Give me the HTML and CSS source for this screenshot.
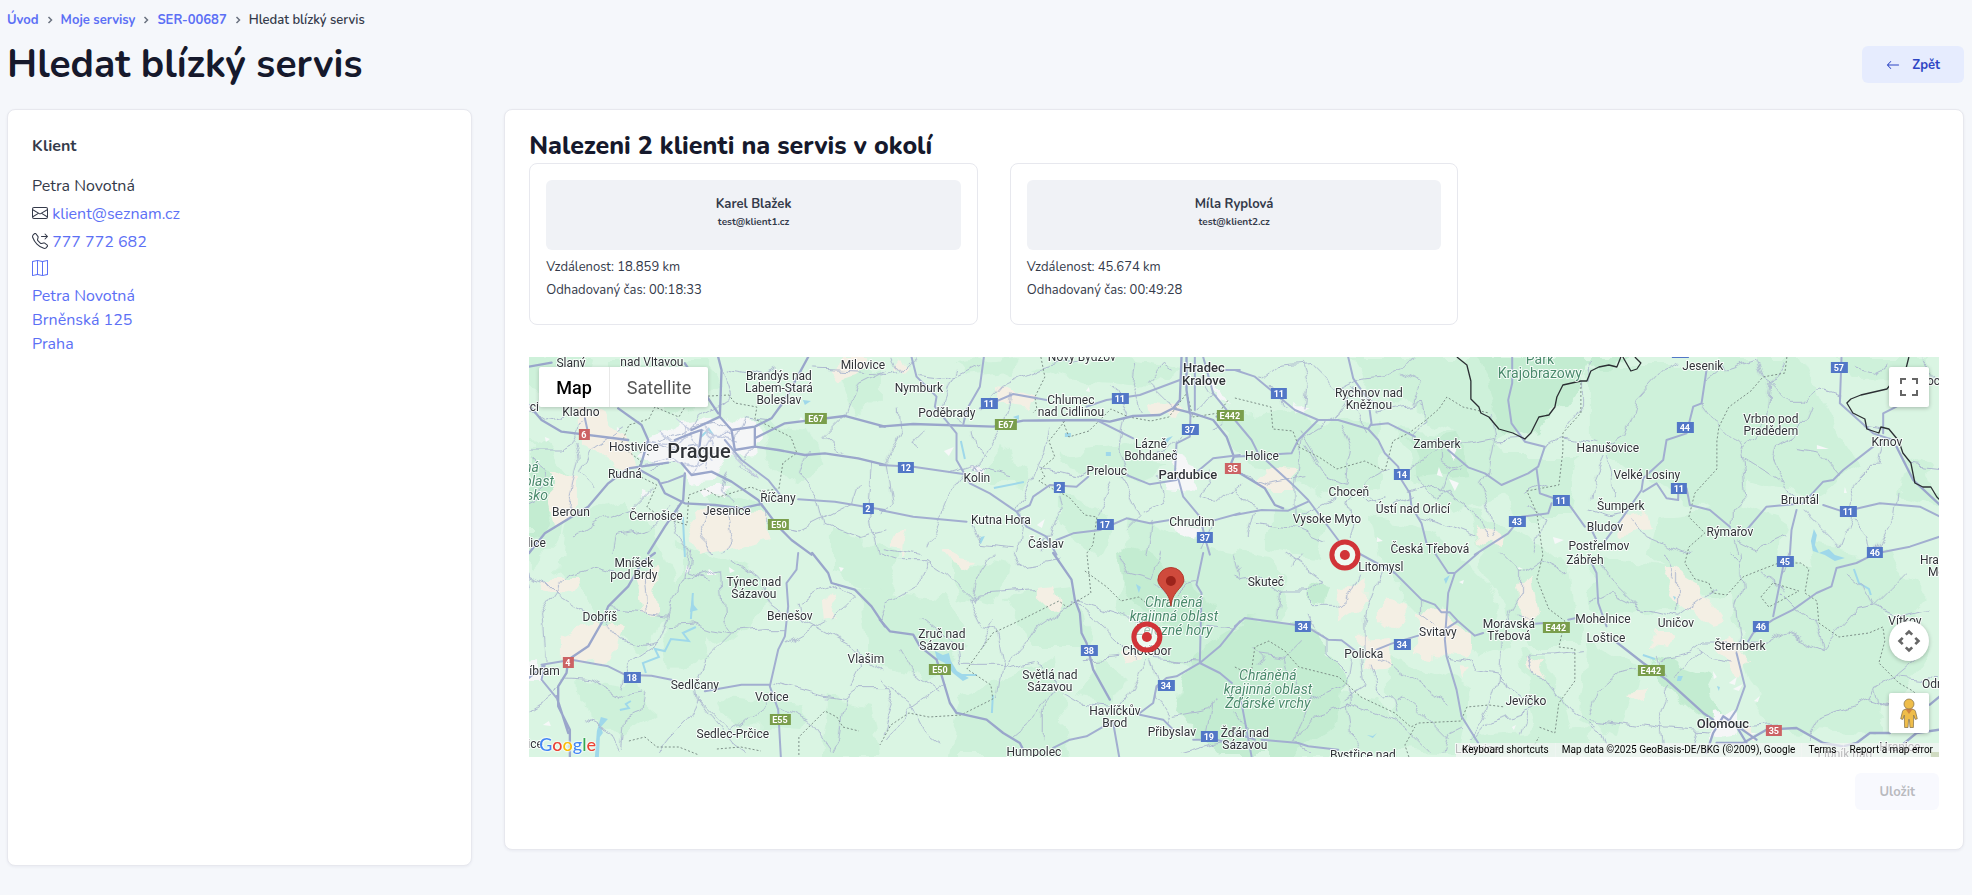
FILE: index.html
```
<!DOCTYPE html>
<html lang="cs">
<head>
    <meta charset="UTF-8">
    <meta name="viewport" content="width=device-width, initial-scale=1.0">
    <title>Hledat blízký servis</title>
    <link rel="stylesheet" href="styles.css">
</head>
<body>
    <header class="page-header">
        <div>
            <nav class="breadcrumb" aria-label="Drobečková navigace">
                <a href="#">Úvod</a>
                <svg class="chevron" viewBox="0 0 6 8"><path d="M1.5 1l3 3-3 3"/></svg>
                <a href="#">Moje servisy</a>
                <svg class="chevron" viewBox="0 0 6 8"><path d="M1.5 1l3 3-3 3"/></svg>
                <a href="#">SER-00687</a>
                <svg class="chevron" viewBox="0 0 6 8"><path d="M1.5 1l3 3-3 3"/></svg>
                <span>Hledat blízký servis</span>
            </nav>
            <h1>Hledat blízký servis</h1>
        </div>
        <button type="button" class="btn btn-back">
            <svg class="arrow" viewBox="0 0 16 16"><path fill-rule="evenodd" d="M15 8a.5.5 0 0 0-.5-.5H2.707l3.147-3.146a.5.5 0 1 0-.708-.708l-4 4a.5.5 0 0 0 0 .708l4 4a.5.5 0 0 0 .708-.708L2.707 8.5H14.5A.5.5 0 0 0 15 8"/></svg>
            Zpět
        </button>
    </header>

    <main class="layout">
        <section class="card client">
            <h2>Klient</h2>
            <p>Petra Novotná</p>
            <p>
                <svg class="icon" viewBox="0 0 16 16"><path d="M0 4a2 2 0 0 1 2-2h12a2 2 0 0 1 2 2v8a2 2 0 0 1-2 2H2a2 2 0 0 1-2-2zm2-1a1 1 0 0 0-1 1v.217l7 4.2 7-4.2V4a1 1 0 0 0-1-1zm13 2.383-4.708 2.825L15 11.105zm-.034 6.876-5.64-3.471L8 9.583l-1.326-.795-5.64 3.47A1 1 0 0 0 2 13h12a1 1 0 0 0 .966-.741M1 11.105l4.708-2.897L1 5.383z"/></svg>
                <a href="#">klient@seznam.cz</a>
            </p>
            <p>
                <svg class="icon" viewBox="0 0 16 16"><path d="M3.654 1.328a.678.678 0 0 0-1.015-.063L1.605 2.3c-.483.484-.661 1.169-.45 1.77a17.6 17.6 0 0 0 4.168 6.608 17.6 17.6 0 0 0 6.608 4.168c.601.211 1.286.033 1.77-.45l1.034-1.034a.678.678 0 0 0-.063-1.015l-2.307-1.794a.68.68 0 0 0-.58-.122l-2.19.547a1.75 1.75 0 0 1-1.657-.459L5.482 8.062a1.75 1.75 0 0 1-.46-1.657l.548-2.19a.68.68 0 0 0-.122-.58zM1.884.511a1.745 1.745 0 0 1 2.612.163L6.29 2.98c.329.423.445.974.315 1.494l-.547 2.19a.68.68 0 0 0 .178.643l2.457 2.457a.68.68 0 0 0 .644.178l2.189-.547a1.75 1.75 0 0 1 1.494.315l2.306 1.794c.829.645.905 1.87.163 2.611l-1.034 1.034c-.74.74-1.846 1.065-2.877.702a18.6 18.6 0 0 1-7.01-4.42 18.6 18.6 0 0 1-4.42-7.009c-.362-1.03-.037-2.137.703-2.877zM12.646.646a.5.5 0 0 1 .708 0l2.5 2.5a.5.5 0 0 1 0 .708l-2.5 2.5a.5.5 0 0 1-.708-.708L14.293 4H9.5a.5.5 0 0 1 0-1h4.793l-1.647-1.646a.5.5 0 0 1 0-.708"/></svg>
                <a href="#">777 772 682</a>
            </p>
            <a class="address" href="#">
                <svg class="icon" viewBox="0 0 16 16"><path fill-rule="evenodd" d="M15.817.113A.5.5 0 0 1 16 .5v14a.5.5 0 0 1-.402.49l-5 1a.5.5 0 0 1-.196 0L5.5 15.01l-4.902.98A.5.5 0 0 1 0 15.5v-14a.5.5 0 0 1 .402-.49l5-1a.5.5 0 0 1 .196 0L10.5.99l4.902-.98a.5.5 0 0 1 .415.103M10 1.91l-4-.8v12.98l4 .8zm1 12.98 4-.8V1.11l-4 .8zm-6-.8V1.11l-4 .8v12.98z"/></svg>
                <span>Petra Novotná</span>
                <span>Brněnská 125</span>
                <span>Praha</span>
            </a>
        </section>

        <section class="card results">
            <h2>Nalezeni 2 klienti na servis v okolí</h2>
            <div class="matches">
                <article class="match">
                    <div class="match-head">
                        <strong>Karel Blažek</strong>
                        <small>test@klient1.cz</small>
                    </div>
                    <p>Vzdálenost: 18.859 km</p>
                    <p>Odhadovaný čas: 00:18:33</p>
                </article>
                <article class="match">
                    <div class="match-head">
                        <strong>Míla Ryplová</strong>
                        <small>test@klient2.cz</small>
                    </div>
                    <p>Vzdálenost: 45.674 km</p>
                    <p>Odhadovaný čas: 00:49:28</p>
                </article>
            </div>

            <div class="map">
                <svg class="map-canvas" viewBox="0 0 1410 400" preserveAspectRatio="xMidYMid slice" role="img" aria-label="Mapa">
                    <defs>
                        <filter id="rough" x="0" y="0" width="100%" height="100%" color-interpolation-filters="sRGB">
                            <feTurbulence type="fractalNoise" baseFrequency="0.035" numOctaves="3" seed="4"/>
                            <feDisplacementMap in="SourceGraphic" scale="26" xChannelSelector="R" yChannelSelector="G"/>
                        </filter>
                        <filter id="wiggle" x="0" y="0" width="100%" height="100%" color-interpolation-filters="sRGB">
                            <feTurbulence type="fractalNoise" baseFrequency="0.05" numOctaves="2" seed="9"/>
                            <feDisplacementMap in="SourceGraphic" scale="14" xChannelSelector="R" yChannelSelector="G"/>
                        </filter>
                    </defs>
                    <rect class="land" x="-20" y="-20" width="1450" height="440"/>

                    <!-- lesy -->
                    <g class="forest" filter="url(#rough)">
                        <path d="M0 0H60L52 30 20 44 0 36ZM76 4H180L190 30 150 60 120 46 84 30ZM0 84L20 88 44 120 34 180 0 210ZM40 160L96 146 130 180 150 240 110 300 60 250 30 210ZM150 186L230 214 240 250 190 290 150 260ZM230 64L280 70 300 110 262 128 236 100ZM182 132L240 150 230 166 186 160ZM312 20L350 10 350 46 326 60ZM300 170L370 200 360 236 300 220Z"/>
                        <path d="M50 320L100 326 130 352 90 380 54 350ZM130 220L172 230 180 300 140 312ZM190 340L280 346 270 372 200 366ZM330 230L420 240 440 290 400 330 340 300ZM300 340L340 350 350 400H290ZM420 200L480 210 470 250 430 240ZM470 90L500 110 490 130 450 126ZM430 10L490 0 480 20 440 24ZM500 6L600 0 650 10 620 30 560 24ZM530 96L600 86 640 110 600 122 540 110ZM530 130L580 160 570 200 530 170ZM430 340L530 300 540 400H420ZM480 240L540 230 560 290 500 290ZM570 300L600 320 580 350 550 340Z"/>
                        <path d="M600 160L680 190 740 200 760 250 700 330 640 300 590 250ZM690 60L770 50 800 100 760 120 700 100ZM770 70L850 66 850 130 800 140 760 110ZM820 0H980L1000 60 960 90 900 60 840 30ZM870 70L960 76 980 130 930 160 880 120ZM740 150L800 160 790 200 740 190ZM840 160L900 170 960 230 980 290 950 300 900 230 850 200ZM870 210L920 230 910 260 870 250ZM940 150L1000 180 1040 210 1050 290 1000 290 960 230ZM960 100L1050 100 1040 160 990 160Z"/>
                        <path d="M1060 10H1200L1240 50 1220 130 1200 160 1110 120 1060 80ZM1190 0H1270L1300 60 1330 110 1280 140 1210 120ZM1130 160L1200 150 1260 170 1240 210 1180 240 1120 200ZM1060 200L1140 210 1150 250 1100 260 1060 250ZM1200 220L1270 200 1330 230 1400 290 1340 380 1240 370 1210 290ZM1380 100L1410 120V150L1370 140ZM1280 190L1360 200 1400 240 1380 262 1290 230ZM1060 280L1110 310 1090 380 1050 360ZM860 300L940 330 930 396 860 390ZM940 380L1060 370V400H940ZM990 290L1020 300 1050 400H1010ZM770 330L850 340 870 400H760ZM1310 0H1400V20L1330 22Z"/>
                    </g>
                    <g class="forest-deep" filter="url(#rough)">
                        <path d="M0 96L16 120 24 150 8 180 0 184ZM590 190L640 206 684 250 670 276 620 260 594 230ZM660 300L720 262 780 268 816 320 806 370 760 400H690L650 350ZM946 0H1066L1040 40 1010 74 980 78 962 50ZM880 82L930 76 940 116 890 120ZM1122 300L1176 320 1196 360 1180 366 1130 320ZM1060 0H1100L1080 14ZM780 224L800 230 796 250 778 244Z"/>
                    </g>
                    <g class="clearing" filter="url(#rough)">
                        <path d="M50 46L90 70 110 112 96 118 50 86ZM16 120L46 114 46 160 28 168ZM160 156L238 158 244 180 170 196ZM296 12L310 0H336V14L306 24ZM104 220L130 216 126 256 110 254ZM34 276L70 260 94 272 84 300 34 308ZM296 240L306 236 312 262 298 264ZM508 232L524 230 530 248 508 250ZM468 30L504 40 500 54 470 50ZM10 220L54 220 40 240 14 234ZM734 110L768 112 768 132 736 132ZM620 44L650 50 646 60 622 56Z"/>
                        <path d="M810 230L838 226 836 250 814 264ZM850 244L880 254 870 270 850 260ZM828 282L864 280 862 310 836 314ZM886 256L920 252 944 280 936 300 890 292ZM984 230L1004 220 1010 260 996 262ZM1144 214L1170 230 1196 266 1180 270 1150 246 1130 214ZM1196 276L1216 300 1210 316 1192 300ZM1000 300L1020 308 1014 322 1002 318ZM926 308L940 310 930 324ZM948 168L970 180 968 194 950 186ZM1094 156L1116 152 1120 172 1096 176ZM590 296L614 294 614 304 596 306ZM1128 276L1144 276 1140 292 1124 290ZM1096 332L1116 330 1116 346ZM1210 366L1226 372 1220 384ZM370 176L378 174 374 196 362 194ZM368 0L378 10 370 18ZM412 196L450 200 440 212 420 206Z"/>
                    </g>
                    <g class="town" filter="url(#rough)">
                        <path d="M118 84L150 66 190 60 226 70 230 94 202 100 190 122 160 124 140 100 110 104ZM176 130L200 130 194 144 180 142ZM648 100L668 110 666 136 640 134ZM676 22L690 44 700 48 680 20ZM1186 354L1204 350 1208 380 1184 384ZM0 308L12 306 12 324 0 324ZM650 168L670 170 664 184 652 180ZM768 44L780 50 772 56ZM914 90L926 92 920 104ZM440 110L454 112 450 126ZM108 134L118 138 112 142Z"/>
                    </g>
                    <g class="snippet">
                        <path d="M16 80l5 2-4 3zM88 70l4 2-4 2zM272 60l3 3-5 1zM310 210l5 1-3 4zM425 90l-10 4 5 5zM516 162l-8 6 5 3zM560 30l-3 4 4 1zM848 180l6 4-6 1zM910 110l4 10-6-2zM920 122l10 4-4 8zM1024 180l11 3-9 4zM990 210l4 2-5 0zM1288 88l12 4-12 0zM930 225l5-2-1 4zM1184 314l4 6-3 2zM1200 326l8-6-2 8zM1204 332l10-5-4 7zM1225 344l6-5-2 6zM1222 376l6 0-5 2zM983 370l4-2-2 5zM158 208l4 5-6 4zM180 212l8 6-10 0zM200 210l6 4-5 2zM1316 130l2 6-3 0zM186 70l-3 4 5 2zM20 364l-6 4 8 1z"/>
                    </g>

                    <!-- vodní plochy -->
                    <g class="water">
                        <path d="M164 239L165 248 169 253 161 255ZM72 360L79 362 72 370 74 376 71 380 70 400H66L68 374ZM274 43L282 44 276 48ZM484 60L490 58 490 63ZM536 76h6v4h-6ZM577 95h5v4h-5ZM636 82L644 79 638 86 634 90ZM406 294L414 298 420 296 422 304 428 314 440 321 434 324 424 316 416 306 408 302ZM607 227L612 230 610 236ZM1149 319L1154 319 1152 324 1148 324ZM1188 329l3 1-1 4ZM1144 239l3 1-1 3ZM452 180l4-1-4 8-2-2ZM1285 172L1288 178 1286 188 1290 196 1300 192 1306 198 1316 201 1306 204 1296 198 1284 194 1282 184ZM915 222l6-4-4 9ZM838 378l6 1 4-3-4 5Z"/>
                        <path class="river" d="M167 270L154 276 160 284 142 282 136 294 126 292 130 300 114 306 117 316M164 236L162 262M102 344l-5 3 3 4-9 2M431 318L448 318M464 338L463 356M432 84L436 102M465 131L495 125M1325 212L1330 226 1340 232 1342 238M1114 298L1126 302M156 200L154 160M172 80L180 72 184 78"/>
                    </g>

                    <!-- silnice nižší třídy -->
                    <g class="road-minor" filter="url(#wiggle)">
                        <g transform="translate(-4 -7) scale(.3333)">
                            <path d="M12 180L60 210 110 200 150 150 140 80M170 210L140 280 100 300 12 300M150 280L160 330 140 420 120 500M290 240L200 300 170 370 210 410M360 270L470 300 520 290M380 420L330 470 250 500 150 560M440 470L370 540 280 560 270 614M470 470L440 540 500 614M550 470L530 540 560 614M610 480L620 560 590 614M690 470L740 520 820 540 900 500 980 460 1000 400M850 310L830 380 880 440 900 520 1000 560 1080 540M1040 340L1030 460 1060 614M960 200L900 260 960 310M1080 60L1000 100 960 200M860 60L1080 70M620 240L560 220 480 240 400 270M460 330L380 360M630 270L660 200 740 210M690 290L640 340 700 380M500 240L520 200 620 140 590 60M20 330L60 360 50 440 12 460M610 60L720 80 760 60M610 360L590 420 640 470"/>
                            <path class="city" d="M360 275L430 280 520 250 620 250M370 340L450 320 490 350 620 290M500 250L520 300 500 370M540 230L560 290 540 350M440 300L470 270 480 220M570 340L530 300 560 250 640 270M630 310L670 350 700 380M450 200L500 240M400 240L460 290"/>
                        </g>
                        <g transform="translate(351 -7) scale(.3333)">
                            <path d="M0 75L60 60 100 21M120 80L200 90 300 40M230 60L190 170 250 220M310 180L370 110 480 60 600 30M390 130L370 220 310 320 280 360M55 180L60 250 20 330 40 470 0 500M130 240L90 280 110 290M270 240L280 290 320 320M510 240L490 310 470 350 430 450 410 490M210 370L280 350 390 380M250 370L200 450 180 500M540 430L550 480 510 540 490 600M700 100L740 190 720 300 750 380M770 40L760 100 790 190M470 350L600 380 630 370M720 380L780 500 740 540M830 380L850 450 790 480M900 250L830 320M1050 180L1000 240M1000 360L960 440 1010 460 1080 400M1000 510L960 600M820 520L800 614M180 500L150 600M280 520L310 580 400 590M10 590L120 610M650 490L700 400M940 200L1000 130 970 80M880 180L800 100 850 40 880 60M40 21L60 60M430 490L410 614"/>
                        </g>
                        <g transform="translate(706 -7) scale(.3333)">
                            <path d="M80 90L130 50 230 40 310 120 370 90 440 80 540 30M360 110L300 200 200 260 190 330 180 420 180 500M210 180L220 100 200 40M320 220L350 290 330 400 270 380 210 290M390 240L340 160 300 200M350 110L420 150 430 180 560 160M540 260L570 210 560 160M620 300L620 340 660 360 690 340M680 360L640 370 620 420M520 430L600 400 640 430 720 490 760 560M770 200L780 260 760 370 740 400 760 470 780 560M780 270L870 265M590 270L700 280 780 265M980 260L930 290M990 240L1040 170 1040 100M1080 280L980 260M300 440L200 490M340 450L360 520 350 560M340 450L410 380 460 350M380 430L460 480 530 440M20 370L100 400 210 380M0 410L60 480 40 560M60 520L200 540 270 570M100 100L150 170M250 340L190 240M600 300L530 350 500 370M1060 100L1070 40M550 500L620 520 720 560M450 440L400 460 380 440M500 70L560 100 540 160M540 380L600 440 640 420 660 450M880 470L930 510 900 614M930 400L870 430"/>
                        </g>
                        <g transform="translate(1061 -7) scale(.3333)">
                            <path d="M20 310L100 260 130 190 140 150 220 60 270 30M40 320L10 390 0 450M50 320L70 380 80 440M340 160L390 230 450 290 460 330 470 440 430 480 430 540M450 300L500 260 530 200 540 100 580 40M540 100L600 160 640 160 690 120 750 140M670 170L650 220 610 260 560 290 550 330 590 420 620 440M400 40L410 60 500 30 520 80 550 100M460 320L540 370 580 400M610 290L680 300 740 370M880 270L860 340 810 390 790 440 780 510 750 590M640 480L690 530 750 590M790 510L830 560 840 614M930 430L920 500 860 600M960 340L1050 350M880 240L820 230M440 570L500 600 590 560M130 500L170 560 300 614M0 480L60 500 110 490M1000 30L1030 90M340 100L390 60M430 570L440 614M800 50L860 70 900 50"/>
                        </g>
                        <g transform="translate(-4 196) scale(.3333)">
                            <path d="M12 70L60 90 90 120 130 70 210 40 280 60M90 120L50 180 60 300 60 330M90 120L150 160 240 200M240 200L290 260 360 280 400 270 430 190 360 180 260 170M360 60L370 180M480 80L440 150 430 190M490 0L480 80 590 50 600 210 620 240 540 320 510 380 520 440 490 500 430 560M430 215L500 210 560 230 620 240 720 230 780 230M120 375L200 380 290 430 350 420M100 410L60 440 12 470M520 440L620 540 690 480 740 440M520 440L620 570 660 600M290 580L300 500 350 480 360 420M740 390L820 410 900 430 960 440 1000 410 1080 410M1080 360L1020 320 980 280 830 200 790 180M1000 280L1010 340 980 400M960 440L940 560 920 600M770 460L850 500 920 600M830 150L880 120 930 100M930 90L1000 130 960 170 920 200M620 20L700 80 740 160 780 190M500 0L490 60 550 80M290 400L310 330 400 270M280 590L260 540 180 500M430 560L400 600M900 200L780 270M20 100L12 60M820 150L830 200"/>
                        </g>
                        <g transform="translate(351 196) scale(.3333)">
                            <path d="M140 20L200 60 280 140 300 60 340 0M140 20L110 100 20 150 0 200M0 0L60 20 140 20M270 140L310 220 350 230 370 320 350 440M270 140L300 120 470 110M130 200L230 280 240 340 370 340M370 340L420 300 470 220 580 145M460 320L380 340M470 320L530 390 490 480 490 570M580 140L740 190 780 220M590 150L700 250 760 310M20 400L100 460 140 540 180 570M0 380L40 450 10 540M200 390L100 460 20 560M610 320L720 310M810 320L830 380 830 440M800 320L760 400 720 460M830 440L870 490 860 510M870 320L940 330M800 290L830 320 960 330M880 60L920 100 950 95M840 0L820 80 740 60 710 0M920 100L880 140 830 100M400 0L420 40 540 20M900 600L1000 570 1080 560M980 220L1080 230M1000 450L980 550M550 420L600 450 700 460M500 440L460 500 400 550M350 200L300 280M60 290L100 360 180 420M880 490L980 470 1020 440"/>
                        </g>
                        <g transform="translate(706 196) scale(.3333)">
                            <path d="M0 0L20 80 70 70 140 120 130 200M140 120L210 120 250 160 300 160 360 110 380 60M210 120L270 80 250 70 150 0M220 180L240 230 270 260 270 300 330 360M440 60L410 140 390 200 390 300M560 140L560 190 600 220M860 60L860 120 820 190 790 230M860 60L800 0M400 330L420 400 470 440 480 480M430 310L490 350 560 400 640 450M640 310L700 320 720 350 780 360 800 380M800 240L790 380 760 480 710 560M790 380L860 430 900 440M880 310L900 370 880 300 960 300 1040 290M900 370L930 380 1000 470 1080 520M350 320L340 380 220 440 180 570M340 450L350 550 370 600M340 450L450 490 530 540 590 600M340 380L350 450 240 490 180 570M150 310L170 380 180 420M80 300L150 310 200 260M60 280L90 310 70 340M380 320L390 400 330 440M720 560L760 510 890 470 900 440M620 600L640 540 680 520M480 440L500 430 560 480 640 560M860 60L920 20 1000 60M200 0L180 40M0 70L20 80M840 180L900 210M180 570L240 600M0 480L60 560M880 480L860 540"/>
                        </g>
                        <g transform="translate(1061 196) scale(.3333)">
                            <path d="M0 150L60 120 140 160 220 180 270 190 350 130 380 110M30 30L80 100 140 160M260 60L260 180M220 0L250 70M450 0L460 100 440 160 450 240 440 290M210 320L300 300 340 270 440 270 540 270 590 240 700 290 740 240 800 170 850 160 950 60M200 310L210 340 230 370M0 480L20 410 80 360 140 350M0 500L220 530 360 540M240 400L210 470 220 530 230 600M330 290L370 320 430 330M570 120L620 170 670 200 700 290M580 110L520 60M770 60L820 100 850 160 920 190 1020 170M980 320L920 370 860 400 840 440 700 490 660 560M930 370L1040 380M860 400L870 450 930 480M250 370L340 300M0 520L40 540 60 600M440 520L560 510M840 440L900 460M310 600L330 540M980 320L960 260M600 0L580 60M420 0L450 30"/>
                        </g>
                    </g>

                    <!-- hranice okresů -->
                    <g class="district">
                        <path d="M120 98L92 88 100 68 120 62 126 50 150 60 162 40 200 38 206 46 228 50 226 62 262 80 268 96 254 106 250 132 232 134 222 130 190 140 176 132 160 138 158 168 132 160 118 150 128 128 108 118 112 104 96 92"/>
                        <path d="M512 0L516 20 506 40 508 52 504 56M536 64L520 84 526 100 512 112 516 120 510 124 524 132 540 140 556 158 568 160 564 188 558 196 562 236 538 250 530 244 510 254 490 264 464 276 438 312 462 328 464 342 432 358 400 360 380 356 362 368 351 388M556 214L578 230 592 244 610 240 622 250M534 64L540 80 560 74 582 52 600 60 622 64 640 60 658 36 664 60 690 56 700 42"/>
                        <path d="M706 41L742 50 744 72 764 74 770 90 790 100 808 112 836 104 856 114 864 84 880 76 896 64 910 52 918 40 934 50 960 56M1052 26L1052 56 1034 76 1034 94 1030 128 998 134 1008 156 1014 198 1008 222 1020 252 1036 264 1030 290 1046 292 1046 324 1030 346 1026 376 1010 370M1000 398L1010 380"/>
                        <path d="M1258 0L1256 16 1234 20 1222 34 1200 50 1190 70 1188 84 1188 112 1166 136 1160 160 1176 176 1160 190 1156 206 1166 222 1180 226 1184 236 1198 238 1214 220 1234 212 1250 206 1272 206 1280 212 1276 236 1288 244 1290 266 1310 280 1340 276 1354 270 1356 284 1350 306 1370 326 1384 334 1400 350M1232 240L1244 226 1270 234 1240 250Z"/>
                        <path d="M706 310L722 318 726 290 740 284 756 294 770 310 810 320 832 340 866 356 882 370 890 366 932 364 938 350 960 348 976 350M880 400L876 388 886 370M270 398L270 380 284 366 296 354 308 360 314 370 330 374M100 384L116 380 128 390 150 390 170 398M188 392L212 390 232 394"/>
                    </g>

                    <!-- hlavní silnice -->
                    <g class="road-main">
                        <g transform="translate(-4 -7) scale(.3333)">
                            <path class="trunk" d="M12 610L60 550 190 470 250 400 310 355 430 338M280 175L350 225 370 270 345 355M12 165L50 210 110 245 310 270M345 360L400 390 420 430 480 460 570 465 650 475 710 462M470 340L500 375 560 365 620 395 700 450 760 530 800 570 860 614M480 370L475 450 420 530 370 610M500 240L585 200 590 60 580 21M585 200L620 240 690 230 740 205 780 150 850 21M690 265L780 220 960 198 1080 230M620 240L630 300 690 290 760 300 840 315 900 310 1000 325 1080 345M690 235L690 290M12 50L80 38M580 190L520 100 480 40M450 270L500 250 530 240 520 320"/>
                            <path d="M180 205L190 250M600 270L650 330 730 390 770 440M820 448L930 455 1080 480M480 375L430 395 410 400"/>
                        </g>
                        <g transform="translate(351 -7) scale(.3333)">
                            <path class="trunk" d="M0 230L100 222 340 230 430 212 650 210 690 215 760 198 840 195 880 175 940 190 1000 210 1040 260 1062 320 1050 350M930 190L920 120 920 21M880 175L900 150 905 21"/>
                            <path d="M95 21L110 80 170 140 165 170 230 250 230 330 270 400 330 430 410 485 440 530 500 560 530 614M312 21L300 110 260 180 250 225M300 175L400 132 500 150M620 170L680 150 780 135 900 90M650 210L760 265M0 345L100 350 250 372M410 485L450 465 460 440 510 405 590 410 625 380M740 375L810 403 890 390M885 375L890 280 930 260 932 190M895 385L910 440 960 500 980 580 990 614M940 375L1000 325 1080 315M0 480L100 500 260 515M530 570L580 550 660 540 740 505 810 520 870 510M1000 512L1080 490M945 21L945 180M970 21L1000 130 1040 180 1010 200M1000 60L1080 60"/>
                        </g>
                        <g transform="translate(706 -7) scale(.3333)">
                            <path d="M0 60L60 80 180 180 250 210 310 210 400 237 430 270 450 310 490 350 500 390 525 430 530 470 560 520 575 580M0 320L170 310 190 270 250 210M0 210L50 270 70 310 180 410 220 450 310 570M340 21L355 85 400 150 410 220 400 237M410 225L460 220 510 245 540 260M640 300L700 352 750 370 800 405 880 370 910 350 930 290 870 275 830 220 820 150 832 100 832 21M905 355L915 430 1000 460 1050 530M950 460L940 490 860 500 820 550 720 614M0 495L80 480 160 482 220 455"/>
                            <path class="trunk" d="M15 370L90 415 120 465 145 475"/>
                        </g>
                        <g transform="translate(1061 -7) scale(.3333)">
                            <path d="M350 60L335 160 310 170 290 250 230 270 220 330 160 385 155 420 100 500 40 580M160 425L200 400 230 445 265 450 265 420 290 415 300 465 360 480 420 530M470 540L530 470 640 460 700 395 730 390 760 360 850 290M700 465L760 485 870 460 990 470 1050 500M620 480L605 540 600 614M755 21L750 160 850 250 910 270M880 250L880 190 920 170M860 610L960 590 1050 560M0 530L20 570"/>
                            <path class="trunk" d="M920 290L970 390 1050 465"/>
                        </g>
                        <g transform="translate(-4 196) scale(.3333)">
                            <path class="trunk" d="M390 0L350 30 310 100 250 160 230 210 190 280 130 320 125 360 100 400 100 460 135 530 135 610M862 0L910 60 920 90 990 110 1040 160 1080 220M95 430L130 540"/>
                            <path d="M820 0L815 50 785 90 790 160 780 250 760 290 735 400 760 470 768 612M50 335L140 320 250 340 300 365 380 368 440 380M540 415L650 395 735 395M60 335L50 380 95 435M12 375L60 335"/>
                        </g>
                        <g transform="translate(351 196) scale(.3333)">
                            <path class="trunk" d="M0 200L30 235 100 245 120 280 170 320 180 350 210 450 230 480 320 500 370 540 420 570 430 590M520 0L575 80 585 140 600 180 605 240 620 270 640 350 690 440"/>
                            <path d="M970 0L950 95 965 120 960 330M1080 205L1020 280 960 330 890 370 860 375 830 400 820 450 780 480M520 585L570 560 620 550 690 510M700 510L718 612M780 485L850 500 880 530M960 330L1020 360 1056 390M940 560L960 560M1010 560L1080 580"/>
                        </g>
                        <g transform="translate(706 196) scale(.3333)">
                            <path d="M0 220L30 195 180 215M230 230L280 260 320 262 370 300M425 290L470 272 550 248M370 0L480 60 560 140 600 155 620 178 645 178 670 205 720 248 745 240M600 0L640 60 660 60 730 0M660 60L640 120 630 260 635 310 665 410 680 490 730 570M630 230L668 205M18 440L50 610M80 560L190 570 220 580 310 590M0 540L60 560M900 212L930 210M1000 200L1020 196"/>
                        </g>
                        <g transform="translate(1061 196) scale(.3333)">
                            <path d="M0 20L20 60 25 150 50 220M580 40L550 190M475 265L490 240 550 200 610 170 680 120 725 100 740 45 800 30 840 10M440 300L465 400 440 470 420 500"/>
                            <path class="trunk" d="M70 260L160 330 230 380 340 480 370 500M350 600L370 540 400 490 500 560M440 520L470 570M380 570L460 570 530 530 620 525 700 570 760 580 800 570 840 540 900 540M1020 455L1050 430M920 590L980 540 1050 530"/>
                        </g>
                    </g>

                    <!-- státní hranice -->
                    <path class="border" d="M928 0L938 8 942 24 942 42 950 50 952 56 960 60 970 72 984 76 996 82 1002 76 1010 60 1020 58 1026 50 1028 40 1034 28 1052 24 1058 24 1062 14 1070 10 1080 8 1088 10 1092 0M1094 0L1102 14 1108 12 1112 6 1106 0M1380 0L1376 16 1368 20 1358 32 1332 38 1322 42 1318 46 1324 56 1336 62 1338 72 1350 76 1352 70 1360 72 1370 84 1374 96 1382 106 1386 126 1394 130 1402 130 1408 140 1412 144"/>

                    <!-- značky silnic -->
                    <g class="shield">
                        <g class="blue">
                            <rect x="452" y="41" width="17" height="11"/><text x="460" y="50">11</text>
                            <rect x="583" y="36" width="17" height="11"/><text x="591" y="45">11</text>
                            <rect x="653" y="67" width="17" height="11"/><text x="661" y="76">37</text>
                            <rect x="369" y="105" width="16" height="11"/><text x="377" y="114">12</text>
                            <rect x="334" y="146" width="11" height="11"/><text x="339" y="155">2</text>
                            <rect x="525" y="125" width="11" height="11"/><text x="530" y="134">2</text>
                            <rect x="568" y="162" width="17" height="11"/><text x="576" y="171">17</text>
                            <rect x="668" y="175" width="16" height="11"/><text x="676" y="184">37</text>
                            <rect x="742" y="31" width="16" height="11"/><text x="750" y="40">11</text>
                            <rect x="865" y="112" width="16" height="11"/><text x="873" y="121">14</text>
                            <rect x="980" y="159" width="17" height="11"/><text x="988" y="168">43</text>
                            <rect x="1024" y="138" width="17" height="11"/><text x="1032" y="147">11</text>
                            <rect x="1143" y="-10" width="17" height="11"/>
                            <rect x="1302" y="5" width="17" height="11"/><text x="1310" y="14">57</text>
                            <rect x="1148" y="65" width="17" height="11"/><text x="1156" y="74">44</text>
                            <rect x="1142" y="126" width="16" height="11"/><text x="1150" y="135">11</text>
                            <rect x="1311" y="149" width="17" height="11"/><text x="1319" y="158">11</text>
                            <rect x="1338" y="190" width="16" height="11"/><text x="1346" y="199">46</text>
                            <rect x="95" y="315" width="17" height="11"/><text x="103" y="324">18</text>
                            <rect x="552" y="288" width="17" height="11"/><text x="560" y="297">38</text>
                            <rect x="629" y="323" width="17" height="11"/><text x="637" y="332">34</text>
                            <rect x="672" y="374" width="17" height="11"/><text x="680" y="383">19</text>
                            <rect x="766" y="264" width="16" height="11"/><text x="774" y="273">34</text>
                            <rect x="865" y="282" width="17" height="11"/><text x="873" y="291">34</text>
                            <rect x="1248" y="199" width="17" height="11"/><text x="1256" y="208">45</text>
                            <rect x="1224" y="264" width="16" height="11"/><text x="1232" y="273">46</text>
                        </g>
                        <g class="green">
                            <rect x="276" y="56" width="22" height="11"/><text x="287" y="65">E67</text>
                            <rect x="466" y="62" width="22" height="11"/><text x="477" y="71">E67</text>
                            <rect x="688" y="53" width="27" height="11"/><text x="701" y="62">E442</text>
                            <rect x="239" y="162" width="21" height="11"/><text x="250" y="171">E50</text>
                            <rect x="400" y="307" width="22" height="11"/><text x="411" y="316">E50</text>
                            <rect x="241" y="357" width="21" height="11"/><text x="251" y="366">E55</text>
                            <rect x="1014" y="265" width="27" height="11"/><text x="1027" y="274">E442</text>
                            <rect x="1109" y="308" width="27" height="11"/><text x="1122" y="317">E442</text>
                            <rect x="1402" y="395" width="17" height="11"/>
                        </g>
                        <g class="red">
                            <rect x="50" y="72" width="11" height="11"/><text x="55" y="81">6</text>
                            <rect x="696" y="106" width="16" height="11"/><text x="704" y="115">35</text>
                            <rect x="34" y="300" width="11" height="11"/><text x="39" y="309">4</text>
                            <rect x="1237" y="368" width="16" height="11"/><text x="1245" y="377">35</text>
                        </g>
                    </g>

                    <!-- popisky -->
                    <g class="place">
                        <text x="42" y="10">Slaný</text>
                        <text x="123" y="9">nad Vltavou</text>
                        <text x="334" y="12">Milovice</text>
                        <text x="250" y="23">Brandýs nad</text>
                        <text x="250" y="35">Labem-Stará</text>
                        <text x="250" y="47">Boleslav</text>
                        <text x="52" y="59">Kladno</text>
                        <text class="end" x="10" y="54">eci</text>
                        <text x="105" y="94">Hostivice</text>
                        <text x="96" y="121">Rudná</text>
                        <text x="42" y="159">Beroun</text>
                        <text x="127" y="163">Černošice</text>
                        <text x="198" y="158">Jesenice</text>
                        <text x="249" y="145">Říčany</text>
                        <text class="end" x="17" y="190">lice</text>
                        <text x="390" y="35">Nymburk</text>
                        <text x="418" y="60">Poděbrady</text>
                        <text x="542" y="47">Chlumec</text>
                        <text x="542" y="59">nad Cidlinou</text>
                        <text x="553" y="4">Nový Bydžov</text>
                        <text x="622" y="91">Lázně</text>
                        <text x="622" y="103">Bohdaneč</text>
                        <text x="448" y="125">Kolin</text>
                        <text x="578" y="118">Prelouc</text>
                        <text x="472" y="167">Kutna Hora</text>
                        <text x="663" y="169">Chrudim</text>
                        <text x="517" y="191">Čáslav</text>
                        <text x="840" y="40">Rychnov nad</text>
                        <text x="840" y="52">Kněžnou</text>
                        <text x="908" y="91">Zamberk</text>
                        <text x="733" y="103">Holice</text>
                        <text x="820" y="139">Choceň</text>
                        <text x="884" y="156">Ústí nad Orlicí</text>
                        <text x="798" y="166">Vysoke Myto</text>
                        <text x="901" y="196">Česká Třebová</text>
                        <text x="1174" y="13">Jesenik</text>
                        <text x="1079" y="95">Hanušovice</text>
                        <text x="1118" y="122">Velké Losiny</text>
                        <text x="1092" y="153">Šumperk</text>
                        <text x="1076" y="174">Bludov</text>
                        <text x="1070" y="193">Postřelmov</text>
                        <text x="1201" y="179">Rýmařov</text>
                        <text x="1242" y="66">Vrbno pod</text>
                        <text x="1242" y="78">Pradědem</text>
                        <text x="1358" y="89">Krnov</text>
                        <text x="1271" y="147">Bruntál</text>
                        <text class="start" x="1398" y="28">ocz</text>
                        <text x="105" y="210">Mníšek</text>
                        <text x="105" y="222">pod Brdy</text>
                        <text x="225" y="229">Týnec nad</text>
                        <text x="225" y="241">Sázavou</text>
                        <text x="71" y="264">Dobříš</text>
                        <text x="261" y="263">Benešov</text>
                        <text x="337" y="306">Vlašim</text>
                        <text class="end" x="31" y="318">íbram</text>
                        <text x="166" y="332">Sedlčany</text>
                        <text x="243" y="344">Votice</text>
                        <text x="204" y="381">Sedlec-Prčice</text>
                        <text class="end" x="14" y="391">ice</text>
                        <text x="413" y="281">Zruč nad</text>
                        <text x="413" y="293">Sázavou</text>
                        <text x="521" y="322">Světlá nad</text>
                        <text x="521" y="334">Sázavou</text>
                        <text x="618" y="298">Chotěbor</text>
                        <text x="586" y="358">Havlíčkův</text>
                        <text x="586" y="370">Brod</text>
                        <text x="643" y="379">Přibyslav</text>
                        <text x="505" y="399">Humpolec</text>
                        <text x="716" y="380">Žďár nad</text>
                        <text x="716" y="392">Sázavou</text>
                        <text x="737" y="229">Skuteč</text>
                        <text x="852" y="214">Litomysl</text>
                        <text x="909" y="279">Svitavy</text>
                        <text x="835" y="301">Policka</text>
                        <text x="980" y="271">Moravská</text>
                        <text x="980" y="283">Třebová</text>
                        <text x="997" y="348">Jevíčko</text>
                        <text x="834" y="402">Bystřice nad</text>
                        <text class="start" x="926" y="396">Letovice</text>
                        <text x="1056" y="207">Zábřeh</text>
                        <text x="1074" y="266">Mohelnice</text>
                        <text x="1077" y="285">Loštice</text>
                        <text x="1147" y="270">Uničov</text>
                        <text x="1211" y="293">Šternberk</text>
                        <text class="start" x="1391" y="207">Hradec</text>
                        <text class="start" x="1399" y="219">Mor</text>
                        <text x="1376" y="268">Vítkov</text>
                        <text class="start" x="1393" y="331">Odry</text>
                        <text x="1371" y="394">Hranice</text>
                        <text x="1316" y="401">Lipník nad</text>
                    </g>
                    <g class="place city-name">
                        <text x="675" y="15">Hradec</text>
                        <text x="675" y="28">Kralove</text>
                        <text x="659" y="122">Pardubice</text>
                        <text x="1194" y="371">Olomouc</text>
                        <text class="capital" x="170" y="101">Prague</text>
                    </g>
                    <g class="place park">
                        <text class="end" x="10" y="115">Chráněná</text>
                        <text class="end" x="25" y="129">oblast</text>
                        <text class="end" x="19" y="143">Křivoklátsko</text>
                        <text x="645" y="250">Chráněná</text>
                        <text x="645" y="264">krajinná oblast</text>
                        <text x="645" y="278">Železné hory</text>
                        <text x="739" y="323">Chráněná</text>
                        <text x="739" y="337">krajinná oblast</text>
                        <text x="739" y="351">Žďárské vrchy</text>
                    </g>
                    <g class="place park-pl">
                        <text x="1011" y="7">Park</text>
                        <text x="1011" y="21">Krajobrazowy</text>
                    </g>

                    <!-- značky klientů -->
                    <path class="pin" d="M642 249c-1-9-4-12-8-17-3-3-5-6-5-9a13 12.500 0 0 1 26 0c0 3-2 6-5 9-4 5-7 8-8 17z"/>
                    <circle class="pin-dot" cx="642" cy="224" r="5"/>
                    <g class="target">
                        <circle class="ring" cx="618" cy="280" r="13"/><circle cx="618" cy="280" r="5"/>
                        <circle class="ring" cx="816" cy="198" r="13"/><circle cx="816" cy="198" r="5"/>
                    </g>
                </svg>

                <div class="map-type">
                    <button type="button" class="active">Map</button>
                    <button type="button">Satellite</button>
                </div>
                <button type="button" class="map-btn map-fullscreen" aria-label="Celá obrazovka">
                    <svg viewBox="0 0 18 18"><path d="M0 0v6h2V2h4V0H0zm16 0h-4v2h4v4h2V0h-2zm0 16h-4v2h6v-6h-2v4zM2 12H0v6h6v-2H2v-4z"/></svg>
                </button>
                <div class="map-side">
                    <button type="button" class="map-btn map-pan" aria-label="Posun mapy">
                        <svg class="pan" viewBox="0 0 24 24"><path d="M8.800 5.700L12 2.500l3.200 3.200M8.800 18.300l3.200 3.200 3.200-3.200M5.700 8.800L2.500 12l3.200 3.200M18.300 8.800l3.200 3.200-3.200 3.200"/></svg>
                    </button>
                    <button type="button" class="map-btn" aria-label="Street View">
                        <svg class="pegman" viewBox="0 0 18 30"><path class="peg" d="M5 11.500h8c1.500 0 2.300 1 2.600 2.300l1.700 7-2.100.6-1.500-4.200-.3 12.300H10l-.6-8h-.8l-.6 8H4.600l-.3-12.300-1.500 4.200-2.100-.6 1.700-7C2.700 12.500 3.500 11.500 5 11.500z"/><path class="collar" d="M5 10.500h8l-4 5.500z"/><circle class="peg" cx="9" cy="6" r="5"/></svg>
                    </button>
                </div>
                <a class="google-logo" href="#" aria-label="Google"><span class="g-blue">G</span><span class="g-red">o</span><span class="g-yellow">o</span><span class="g-blue">g</span><span class="g-green">l</span><span class="g-red">e</span></a>
                <div class="map-legal">
                    <button type="button">Keyboard shortcuts</button>
                    <span>Map data ©2025 GeoBasis-DE/BKG (©2009), Google</span>
                    <a href="#">Terms</a>
                    <a href="#">Report a map error</a>
                </div>
            </div>

            <div class="actions">
                <button type="button" class="btn btn-save" disabled>Uložit</button>
            </div>
        </section>
    </main>
</body>
</html>
```

FILE: styles.css
```
:root {
    --body-bg: #f5f7fb;
    --text: #343a4a;
    --heading: #16192c;
    --link: #5c70f5;
    --line: #e7e8ee;
}

* {
    box-sizing: border-box;
}

body {
    margin: 0;
    padding: 8px 8px 28px 7px;
    min-height: 100vh;
    background: var(--body-bg);
    color: var(--text);
    font: 400 16px/24px "Nunito", "Open Sans", "Noto Sans", sans-serif;
}

h1, h2, p {
    margin: 0;
}

a {
    color: var(--link);
    text-decoration: none;
}

button {
    font-family: inherit;
    cursor: pointer;
}

/* Hlavička */
.page-header {
    display: flex;
    justify-content: space-between;
    align-items: flex-end;
    margin-bottom: 26px;
}

.breadcrumb {
    display: flex;
    align-items: center;
    gap: 8px;
    font-size: 13px;
    font-weight: 600;
    line-height: 24px;
}

.breadcrumb a {
    font-weight: 700;
}

.chevron {
    width: 6px;
    height: 8px;
    fill: none;
    stroke: #6b7280;
    stroke-width: 1.5;
}

h1 {
    margin-top: 15px;
    font-size: 39px;
    font-weight: 700;
    line-height: 36px;
    color: var(--heading);
}

.btn {
    display: flex;
    align-items: center;
    justify-content: center;
    gap: 12px;
    height: 37px;
    padding: 0 24px;
    border: 0;
    border-radius: 6px;
    font-size: 13px;
    font-weight: 700;
}

.btn-back {
    background: #e6ecfe;
    color: #2d45c4;
}

.arrow {
    width: 14px;
    height: 14px;
    fill: currentColor;
}

.btn-save {
    background: #f8f9fe;
    color: #b9babf;
}

/* Rozložení */
.layout {
    display: grid;
    grid-template-columns: repeat(12, minmax(0, 1fr));
    gap: 32px;
    align-items: start;
}

.card {
    background: #fff;
    border: 1px solid var(--line);
    border-radius: 8px;
    box-shadow: 0 1px 3px rgba(30, 40, 80, 0.06);
}

.client {
    grid-column: span 3;
    min-height: 757px;
    padding: 24px;
}

.client h2 {
    margin-bottom: 16px;
    font-size: 16px;
    font-weight: 700;
    line-height: 24px;
}

.client p {
    margin-bottom: 4px;
}

.icon {
    width: 16px;
    height: 16px;
    vertical-align: -2px;
    fill: currentColor;
}

.address {
    display: flex;
    flex-direction: column;
}

.address .icon {
    margin: 2px 0 8px;
}

.results {
    grid-column: span 9;
    padding: 20px 24px 39px;
}

.results h2 {
    font-size: 25px;
    font-weight: 800;
    line-height: 33px;
    color: var(--heading);
}

.matches {
    display: grid;
    grid-template-columns: repeat(3, minmax(0, 1fr));
    gap: 32px;
    margin-bottom: 32px;
}

.match {
    padding: 16px 16px 22px;
    border: 1px solid var(--line);
    border-radius: 8px;
    font-size: 13px;
    line-height: 23px;
}

.match-head {
    display: flex;
    flex-direction: column;
    align-items: center;
    height: 70px;
    margin-bottom: 6px;
    padding-top: 15px;
    border-radius: 6px;
    background: #f0f2f6;
    line-height: 18px;
}

.match-head strong {
    font-size: 13px;
    font-weight: 700;
}

.match-head small {
    font-size: 10px;
    font-weight: 700;
}

.actions {
    display: flex;
    justify-content: flex-end;
    margin-top: 16px;
}

/* Mapa */
.map {
    position: relative;
    height: 400px;
    overflow: hidden;
    font-family: Roboto, Arial, sans-serif;
}

.map-canvas {
    display: block;
    width: 100%;
    height: 100%;
}

.land { fill: #daf5e3; }
.forest { fill: #cef1da; }
.forest-deep { fill: #c3ecd1; }
.clearing { fill: #f4efe4; }
.town { fill: #f5f6f7; }
.snippet { fill: #f6f8f8; }
.water { fill: #9fd8ea; }

.river {
    fill: none;
    stroke: #9fd8ea;
    stroke-width: 2;
}

.road-minor,
.road-main {
    fill: none;
    stroke-linejoin: round;
    stroke-linecap: round;
}

.road-minor {
    stroke: #adb8d0;
    stroke-width: 3;
}

.road-minor .city {
    stroke: #c3cbe0;
    stroke-width: 4;
}

.road-main {
    stroke: #a2aed0;
    stroke-width: 6;
}

.road-main .trunk {
    stroke: #9aa6cb;
    stroke-width: 7;
}

.district {
    fill: none;
    stroke: #7d8f88;
    stroke-dasharray: 2 2;
}

.border {
    fill: none;
    stroke: #2b2f33;
    stroke-width: 1.3;
    stroke-linejoin: round;
}

.shield text {
    fill: #fff;
    font-size: 9px;
    font-weight: 700;
    text-anchor: middle;
}

.blue rect { fill: #5277c7; }
.green rect { fill: #7a9e4c; }
.red rect { fill: #cc6264; }

.place text {
    fill: #303338;
    font-size: 12px;
    text-anchor: middle;
    stroke: rgba(255, 255, 255, 0.85);
    stroke-width: 2px;
    stroke-linejoin: round;
    paint-order: stroke;
}

.place .end { text-anchor: end; }
.place .start { text-anchor: start; }

.city-name text {
    font-size: 13px;
    font-weight: 500;
}

.city-name .capital {
    font-size: 20px;
}

.park text {
    fill: #4a8a6c;
    font-size: 14px;
    font-style: italic;
}

.park-pl text {
    fill: #4a8a6c;
    font-size: 14px;
}

.pin {
    fill: #cf4a3c;
    stroke: #b3382d;
}

.pin-dot { fill: #9c231b; }
.target { fill: #d13438; }

.target .ring {
    fill: rgba(255, 255, 255, 0.5);
    stroke: #d13438;
    stroke-width: 5;
}

/* Ovládání mapy */
.map-type {
    position: absolute;
    top: 10px;
    left: 10px;
    display: flex;
    background: #fff;
    border-radius: 2px;
    box-shadow: 0 1px 4px rgba(0, 0, 0, 0.2);
}

.map-type button {
    height: 40px;
    padding: 0 17px;
    border: 0;
    background: none;
    color: #565656;
    font-size: 18px;
}

.map-type .active {
    border-right: 1px solid #e8e8e8;
    color: #000;
    font-weight: 500;
}

.map-btn {
    display: flex;
    align-items: center;
    justify-content: center;
    width: 40px;
    height: 40px;
    padding: 0;
    border: 0;
    border-radius: 2px;
    background: #fff;
    box-shadow: 0 1px 4px rgba(0, 0, 0, 0.25);
}

.map-btn svg {
    width: 18px;
    height: 18px;
    fill: #666;
}

.map-fullscreen {
    position: absolute;
    top: 10px;
    right: 10px;
}

.map-side {
    position: absolute;
    right: 10px;
    bottom: 24px;
    display: flex;
    flex-direction: column;
    gap: 32px;
}

.map-pan {
    border-radius: 50%;
}

.map-btn .pan {
    width: 24px;
    height: 24px;
    fill: none;
    stroke: #666;
    stroke-width: 2.6;
}

.map-btn .pegman {
    height: 30px;
}

.pegman .peg {
    fill: #efbd4a;
    stroke: #7c6c48;
    stroke-width: 0.7;
}

.pegman .collar { fill: #cf8340; }

.google-logo {
    position: absolute;
    left: 10px;
    bottom: 2px;
    font: 500 18px/22px Lato, sans-serif;
    text-shadow: 0 0 2px #fff, 0 0 2px #fff, 0 0 2px #fff;
}

.g-blue { color: #4285f4; }
.g-red { color: #ea4335; }
.g-yellow { color: #fbbc05; }
.g-green { color: #34a853; }

.map-legal {
    position: absolute;
    right: 0;
    bottom: 0;
    display: flex;
    font-size: 10px;
    line-height: 14px;
}

.map-legal > * {
    padding: 0 6px;
    border: 0;
    background: rgba(245, 245, 245, 0.7);
    color: #000;
    font: inherit;
}

.map-legal > * + * {
    border-left: 1px solid rgba(245, 245, 245, 0.4);
}
```
